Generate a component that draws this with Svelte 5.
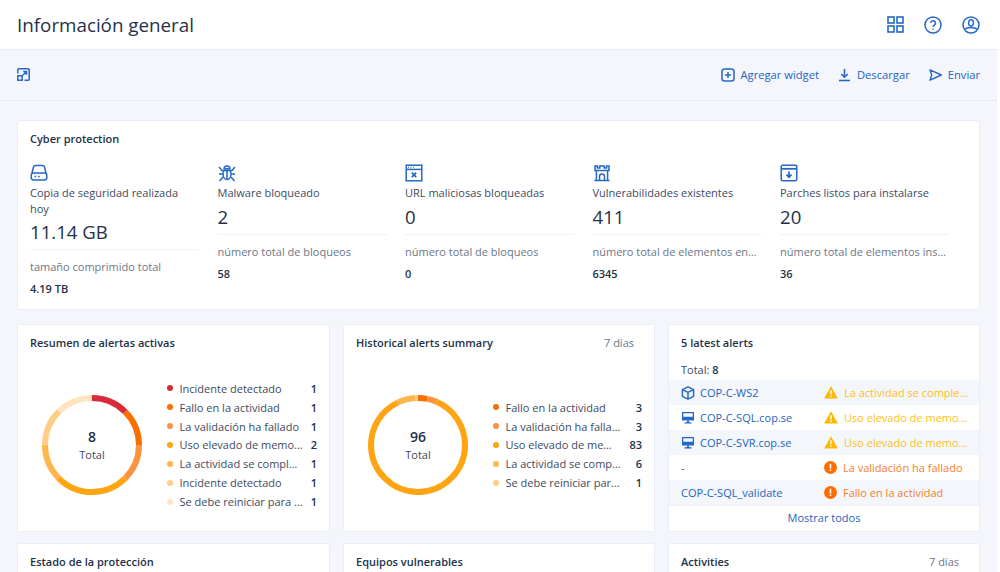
<script>
  const C = 2 * Math.PI * 47;
  const c = { red: '#d92a3b', or: '#fb6f00', lo: '#fd9240', am: '#ffa412', l1: '#ffb64f', l2: '#ffce85', l3: '#ffe4c2' };

  function segs(items) {
    const total = items.reduce((s, i) => s + i.n, 0);
    let acc = 0;
    return items.map((i) => {
      const len = (i.n / total) * C;
      const r = { color: i.color, dash: `${len} ${C - len}`, offset: -acc };
      acc += len;
      return r;
    });
  }

  const active = [
    { label: 'Incidente detectado', n: 1, color: c.red },
    { label: 'Fallo en la actividad', n: 1, color: c.or },
    { label: 'La validación ha fallado', n: 1, color: c.lo },
    { label: 'Uso elevado de memoria', n: 2, color: c.am },
    { label: 'La actividad se completó con alertas', n: 1, color: c.l1 },
    { label: 'Incidente detectado', n: 1, color: c.l2 },
    { label: 'Se debe reiniciar para aplicar', n: 1, color: c.l3 }
  ];
  const hist = [
    { label: 'Fallo en la actividad', n: 3, color: c.or },
    { label: 'La validación ha fallado', n: 3, color: c.lo },
    { label: 'Uso elevado de memoria', n: 83, color: c.am },
    { label: 'La actividad se completó', n: 6, color: c.l1 },
    { label: 'Se debe reiniciar para aplicar', n: 1, color: c.l2 }
  ];
  const tiles = [
    { icon: 'disk', label: 'Copia de seguridad realizada hoy', value: '11.14 GB', sub: 'tamaño comprimido total', n: '4.19 TB' },
    { icon: 'bug', label: 'Malware bloqueado', value: '2', sub: 'número total de bloqueos', n: '58' },
    { icon: 'url', label: 'URL maliciosas bloqueadas', value: '0', sub: 'número total de bloqueos', n: '0' },
    { icon: 'castle', label: 'Vulnerabilidades existentes', value: '411', sub: 'número total de elementos encontrados', n: '6345' },
    { icon: 'patch', label: 'Parches listos para instalarse', value: '20', sub: 'número total de elementos instalados', n: '36' }
  ];
  const alerts = [
    { icon: 'box', name: 'COP-C-WS2', kind: 'warn', text: 'La actividad se completó con alertas' },
    { icon: 'pc', name: 'COP-C-SQL.cop.se', kind: 'warn', text: 'Uso elevado de memoria detectado' },
    { icon: 'pc', name: 'COP-C-SVR.cop.se', kind: 'warn', text: 'Uso elevado de memoria detectado' },
    { icon: '', name: '-', kind: 'err', text: 'La validación ha fallado' },
    { icon: '', name: 'COP-C-SQL_validate', kind: 'err', text: 'Fallo en la actividad' }
  ];
</script>

{#snippet donut(items, total)}
  <div class="donut">
    <svg width="100" height="100" viewBox="0 0 100 100">
      <g transform="rotate(-90 50 50)">
        {#each segs(items) as s}
          <circle cx="50" cy="50" r="47" fill="none" stroke={s.color} stroke-width="6" stroke-dasharray={s.dash} stroke-dashoffset={s.offset} />
        {/each}
      </g>
    </svg>
    <div class="center"><b>{total}</b><span>Total</span></div>
  </div>
{/snippet}

{#snippet legend(items, wide)}
  <ul class="legend" class:wide>
    {#each items as i}
      <li><i style="background:{i.color}"></i><span>{i.label}</span><b>{i.n}</b></li>
    {/each}
  </ul>
{/snippet}

<div class="page">
  <header class="top">
    <h1>Información general</h1>
    <div class="top-icons">
      <svg width="17" height="17" viewBox="0 0 17 17" fill="none" stroke="#2668c5" stroke-width="1.6"><rect x="1" y="1" width="6" height="6"/><rect x="10" y="1" width="6" height="6"/><rect x="1" y="10" width="6" height="6"/><rect x="10" y="10" width="6" height="6"/></svg>
      <svg width="18" height="18" viewBox="0 0 18 18" fill="none" stroke="#2668c5" stroke-width="1.5"><circle cx="9" cy="9" r="8"/><path d="M6.6 7.100a2.400 2.400 0 1 1 3.700 2c-.9.6-1.300 1-1.300 1.900"/><path d="M9 12.400v1.400"/></svg>
      <svg width="18" height="18" viewBox="0 0 18 18" fill="none" stroke="#2668c5" stroke-width="1.5"><circle cx="9" cy="9" r="8"/><rect x="6.700" y="3.800" width="4.600" height="6.200" rx="2.300"/><path d="M2.800 13.200c1.600-1.300 3.200-1.700 6.200-1.700s4.600.4 6.200 1.700"/></svg>
    </div>
  </header>

  <div class="toolbar">
    <svg width="13" height="13" viewBox="0 0 13 13" fill="none" stroke="#2668c5" stroke-width="1.5"><path d="M.8 5.500V1.800a1 1 0 0 1 1-1h9.400a1 1 0 0 1 1 1v9.400a1 1 0 0 1-1 1H7.500"/><path d="M5.800 7.200 9.300 3.700M6.300 3.500h3.200v3.200"/><rect x=".8" y="7.800" width="4.400" height="4.400"/></svg>
    <div class="actions">
      <a href="#a"><svg width="14" height="14" viewBox="0 0 14 14" fill="none" stroke="#2668c5" stroke-width="1.5"><rect x="1" y="1" width="12" height="12" rx="2.500"/><path d="M7 4v6M4 7h6"/></svg>Agregar widget</a>
      <a href="#d"><svg width="13" height="14" viewBox="0 0 13 14" fill="none" stroke="#2668c5" stroke-width="1.6"><path d="M6.500 1v8M3.300 6l3.200 3.200L9.700 6"/><path d="M1 12.500h11"/></svg>Descargar</a>
      <a href="#e"><svg width="13" height="14" viewBox="0 0 13 14" fill="none" stroke="#2668c5" stroke-width="1.400" stroke-linejoin="round"><path d="M1 1.800 12.300 7 1 12.200 2.700 7Z"/></svg>Enviar</a>
    </div>
  </div>

  <main class="content">
    <section class="card cyber">
      <h2>Cyber protection</h2>
      <div class="tiles">
        {#each tiles as t}
          <div class="tile">
            <svg class="ticon" width="18" height="18" viewBox="0 0 18 18" fill="none" stroke="#2668c5" stroke-width="1.5">
              {#if t.icon === 'disk'}
                <path d="M2 9 3.500 3C3.800 1.900 4.500 1.500 5.500 1.500h7c1 0 1.700.4 2 1.500L16 9"/><rect x="1.200" y="9" width="15.600" height="7" rx="2.400"/><path d="M4.500 12.600h1.700M8 12.600h1.700"/>
              {:else if t.icon === 'bug'}
                <ellipse cx="9" cy="10" rx="4" ry="5.500"/><path d="M6 5a3 3 0 0 1 6 0M9 4.800v10.600M1 3l3 3.400h10L17 3M1 10h4M13 10h4M1.500 17 5 13M16.500 17 13 13"/>
              {:else if t.icon === 'url'}
                <rect x="1.200" y="1.200" width="15.600" height="15.600"/><path d="M1.200 5.400h15.600"/><path d="M3 3.300h1M5.500 3.300h1M8 3.300h1" stroke-width="1"/><path d="m6.800 8.700 4.400 4.400m0-4.400-4.400 4.400" stroke-width="1.700"/>
              {:else if t.icon === 'castle'}
                <path d="M2 2v4.500h14V2h-2.400v2h-2.400V2H6.800v2H4.400V2ZM3.400 6.500v10h11.200v-10M1.500 16.500h15"/><path d="M6.500 16.500v-4a2.500 2.500 0 0 1 5 0v4"/>
              {:else if t.icon === 'patch'}
                <rect x="1.200" y="1.200" width="15.600" height="15.600" rx="1.500"/><path d="M1.200 4.800h15.600" stroke-width="1.800"/><path d="M9 7.500v5.500M6.400 10.600 9 13.200l2.600-2.600" stroke-width="1.700"/>
              {/if}
            </svg>
            <div class="tlabel">{t.label}</div>
            <div class="tvalue">{t.value}</div>
            <div class="tsub">{t.sub}</div>
            <div class="tn">{t.n}</div>
          </div>
        {/each}
      </div>
    </section>

    <div class="row">
      <section class="card">
        <h2>Resumen de alertas activas</h2>
        <div class="chart">
          {@render donut(active, 8)}
          {@render legend(active, false)}
        </div>
      </section>
      <section class="card">
        <div class="head"><h2>Historical alerts summary</h2><span>7 días</span></div>
        <div class="chart">
          {@render donut(hist, 96)}
          {@render legend(hist, true)}
        </div>
      </section>
      <section class="card latest">
        <h2>5 latest alerts</h2>
        <div class="total">Total: <b>8</b></div>
        <div class="alerts">
          {#each alerts as a}
            <div class="alert">
              <div class="name">
                {#if a.icon === 'box'}
                  <svg width="14" height="14" viewBox="0 0 14 14" fill="none" stroke="#2668c5" stroke-width="1.500" stroke-linejoin="round"><path d="M7 .9 12.600 3.600v6.800L7 13.100 1.400 10.400V3.600Z"/><path d="M1.400 3.600 7 6.400l5.600-2.800M7 6.400v6.700"/></svg>
                {:else if a.icon === 'pc'}
                  <svg width="14" height="14" viewBox="0 0 14 14" fill="#2668c5"><path d="M1 1h12v8.500H1zM2.300 2.300v3.400h9.400V2.300z" fill-rule="evenodd"/><path d="M6 9.500h2v1.800H6zM3.500 11.300h7v1.200h-7z"/></svg>
                {/if}
                <span>{a.name}</span>
              </div>
              <div class="status {a.kind}">
                {#if a.kind === 'warn'}
                  <svg width="14" height="13" viewBox="0 0 14 13"><path d="M7 .3 13.800 12.500H.2Z" fill="#ffb800"/><path d="M6.300 4.200h1.400v4.400H6.300zM6.300 9.600h1.400v1.400H6.300z" fill="#fff"/></svg>
                {:else}
                  <svg width="13" height="13" viewBox="0 0 13 13"><circle cx="6.500" cy="6.500" r="6.500" fill="#fb6f00"/><path d="M5.700 2.800h1.600v4.700H5.700zM5.700 8.500h1.600v1.600H5.700z" fill="#fff"/></svg>
                {/if}
                <span>{a.text}</span>
              </div>
            </div>
          {/each}
        </div>
        <a class="all" href="#t">Mostrar todos</a>
      </section>
    </div>

    <div class="row last">
      <section class="card stub"><h2>Estado de la protección</h2></section>
      <section class="card stub"><h2>Equipos vulnerables</h2></section>
      <section class="card stub"><div class="head"><h2>Activities</h2><span>7 días</span></div></section>
    </div>
  </main>
</div>

<style>
  :global(body) { margin: 0; background: #fff; overflow: hidden; }
  * { box-sizing: border-box; }
  .page {
    width: 997px; height: 572px; overflow: hidden; background: #f4f6fc;
    font-family: "Open Sans", "Noto Sans", sans-serif; color: #243148; font-size: 11px;
  }
  .top {
    height: 50px; background: #fff; border-bottom: 1px solid #e6ebf5;
    display: flex; align-items: center; justify-content: space-between; padding: 0 17px;
  }
  h1 { margin: 0; font-size: 18.800px; font-weight: 400; color: #243148; }
  .top-icons { display: flex; align-items: center; gap: 20px; }
  .toolbar {
    height: 51px; border-bottom: 1px solid #e3e9f7; padding: 0 17px 1px;
    display: flex; align-items: center; justify-content: space-between;
  }
  .actions { display: flex; gap: 19px; }
  .actions a { display: flex; align-items: center; gap: 6px; color: #2464bf; text-decoration: none; font-size: 11.200px; font-weight: 500; }
  .content { padding: 19px 17px 0; display: flex; flex-direction: column; gap: 14px; }
  .card { background: #fff; border: 1px solid #e8edf7; border-radius: 3px; width: 963px; }
  h2 { margin: 0; font-size: 11px; font-weight: 600; color: #243148; line-height: 16px; }
  .cyber { height: 190px; padding: 10px 12px 0; }
  .tiles { display: grid; grid-template-columns: repeat(5, 187.500px); margin-top: 17px; }
  .tile { padding-right: 18.500px; min-width: 0; }
  .ticon { display: block; margin-bottom: 3px; }
  .tlabel { line-height: 15.500px; color: #3d4a60; }
  .tvalue { font-size: 18.600px; line-height: 27px; margin-top: 2px; padding-bottom: 4px; border-bottom: 1px solid #eff2f9; color: #243148; }
  .tsub { line-height: 16px; margin-top: 9px; color: #6c7686; white-space: nowrap; overflow: hidden; text-overflow: ellipsis; }
  .tn { line-height: 16px; margin-top: 6px; font-weight: 600; color: #243148; }
  .row { display: grid; grid-template-columns: 313px 312px 312px; gap: 13px; width: 963px; height: 205px; flex: none; }
  .row .card { width: auto; min-width: 0; padding: 10px 12px; position: relative; }
  .row .stub { height: 60px; }
  .head { display: flex; justify-content: space-between; }
  .head span { color: #6c7686; line-height: 16px; margin-right: 8px; }
  .chart { display: flex; align-items: center; height: 152px; margin-top: 18px; padding-left: 12px; gap: 24.500px; }
  .donut { position: relative; width: 100px; height: 100px; flex: none; }
  .donut svg { display: block; }
  .center { position: absolute; inset: 0; display: flex; flex-direction: column; align-items: center; justify-content: center; }
  .center b { font-size: 14px; font-weight: 600; line-height: 19px; }
  .center span { line-height: 17px; color: #3d4a60; }
  .legend { list-style: none; margin: 0; padding: 0; flex: 1; min-width: 0; }
  .legend li { display: flex; align-items: center; height: 18.900px; color: #3d4a60; }
  .legend i { width: 6px; height: 6px; border-radius: 50%; flex: none; margin-right: 7px; }
  .legend span { flex: 1; min-width: 0; white-space: nowrap; overflow: hidden; text-overflow: ellipsis; }
  .legend b { font-weight: 600; margin-left: 7px; color: #243148; text-align: right; min-width: 7px; }
  .legend.wide b { min-width: 13px; }
  .latest { padding: 10px 0 0 !important; }
  .latest h2 { padding: 0 12px; }
  .total { padding: 0 12px; margin-top: 11px; line-height: 16px; color: #3d4a60; }
  .total b { font-weight: 600; color: #243148; }
  .alerts { margin-top: 2px; border-bottom: 1px solid #eff2f9; }
  .alert { display: flex; height: 25px; align-items: center; padding: 0 9px 0 12px; }
  .alert:nth-child(odd) { background: #f3f6fb; }
  .name { width: 143px; flex: none; display: flex; align-items: center; gap: 5px; color: #2464bf; font-weight: 500; white-space: nowrap; overflow: hidden; }
  .name svg, .status svg { flex: none; }
  .status { display: flex; align-items: center; gap: 6px; min-width: 0; flex: 1; }
  .status span { white-space: nowrap; overflow: hidden; text-overflow: ellipsis; }
  .status.warn { color: #ffbe1a; }
  .status.err { color: #fb7d1e; }
  .all { display: block; text-align: center; color: #2464bf; font-weight: 500; text-decoration: none; line-height: 24px; }
</style>
